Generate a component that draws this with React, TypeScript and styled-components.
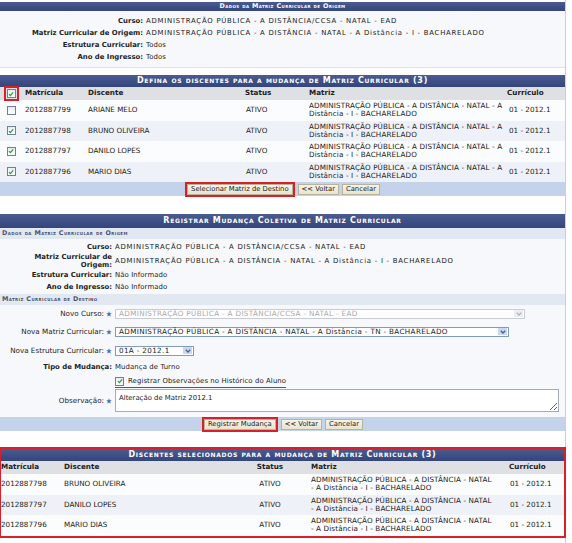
import React from "react";
import styled, { createGlobalStyle } from "styled-components";

const GlobalStyle = createGlobalStyle`
  body {
    margin: 0;
    background: #fff;
    font-family: "DejaVu Sans", Verdana, sans-serif;
    font-size: 7.2px;
    color: #222;
  }
`;

const Page = styled.div`
  width: 566px;
  min-height: 543px;
  border-right: 1px solid #cfcfcf;
  padding-top: 2px;
  box-sizing: border-box;
`;

const Caption = styled.div<{ $small?: boolean; $h?: number }>`
  background: linear-gradient(#4a5b90, #34457c);
  color: #fff;
  text-align: center;
  font-weight: bold;
  font-variant: small-caps;
  font-size: ${(p) => (p.$small ? "6.4px" : "8px")};
  letter-spacing: ${(p) => (p.$small ? "0.4px" : "0.7px")};
  height: ${(p) => (p.$small ? 9 : p.$h ?? 12)}px;
  line-height: ${(p) => (p.$small ? 9 : p.$h ?? 12)}px;
`;

const SubCaption = styled.div`
  background: #e2e8f2;
  color: #4b5370;
  font-weight: bold;
  font-variant: small-caps;
  font-size: 6.4px;
  letter-spacing: 0.4px;
  height: 11px;
  line-height: 11px;
  padding-left: 2px;
`;

const InfoPanel = styled.section`
  background: #f7f8fb;
  border-bottom: 1px solid #e2e2e2;
  padding: 4px 0 4px;
`;

const InfoGrid = styled.div<{ $label: number; $pad?: string }>`
  display: grid;
  grid-template-columns: ${(p) => p.$label}px 1fr;
  column-gap: 3px;
  align-items: center;
  padding: ${(p) => p.$pad ?? "0"};
`;

const Label = styled.div`
  font-weight: bold;
  font-size: 6.9px;
  text-align: right;
  line-height: 8px;
  min-height: 12px;
  display: flex;
  align-items: center;
  justify-content: flex-end;
`;

const Value = styled.div<{ $caps?: boolean }>`
  line-height: 12px;
  font-size: 6.9px;
  letter-spacing: ${(p) => (p.$caps ? "0.75px" : "0.1px")};
`;

const TableBox = styled.section<{ $marked?: boolean }>`
  margin-top: ${(p) => (p.$marked ? "16px" : "7px")};
  border: ${(p) => (p.$marked ? "2px solid #d8202a" : "none")};
  margin-left: ${(p) => (p.$marked ? "-1px" : "0")};
  margin-right: ${(p) => (p.$marked ? "-1px" : "0")};
`;

const Row = styled.div<{ $cols: string; $alt?: boolean; $head?: boolean }>`
  display: grid;
  grid-template-columns: ${(p) => p.$cols};
  align-items: center;
  min-height: ${(p) => (p.$head ? "13px" : "20.5px")};
  background: ${(p) => (p.$head ? "#dfe0e4" : p.$alt ? "#eef2f8" : "#fbfcfd")};
  font-weight: ${(p) => (p.$head ? "bold" : "normal")};
`;

const Cell = styled.div<{ $pad?: number; $center?: boolean }>`
  padding-left: ${(p) => p.$pad ?? 3}px;
  text-align: ${(p) => (p.$center ? "center" : "left")};
  line-height: 8.2px;
  display: flex;
  align-items: center;
  justify-content: ${(p) => (p.$center ? "center" : "flex-start")};
`;

const Matriz = styled.div`
  white-space: nowrap;
  line-height: 8.2px;
  letter-spacing: 0.12px;
`;

const Footer = styled.div`
  background: #c5d3ea;
  height: 14px;
  display: flex;
  justify-content: center;
  align-items: center;
  gap: 3px;
`;

const Button = styled.button<{ $marked?: boolean }>`
  font-family: inherit;
  font-size: 6.8px;
  color: #222;
  background: linear-gradient(#f6f3e6, #e9e4cf);
  border: 1px solid #b8b49c;
  height: 11px;
  padding: 0 3px;
  line-height: 9px;
  outline: ${(p) => (p.$marked ? "2px solid #d8202a" : "none")};
  outline-offset: 0px;
  margin: ${(p) => (p.$marked ? "0 2px" : "0")};
`;

const Box = styled.span<{ $marked?: boolean }>`
  display: inline-flex;
  width: 7px;
  height: 7px;
  border: 1px solid #6f7f9c;
  background: linear-gradient(#e8ebf0, #fff);
  align-items: center;
  justify-content: center;
  outline: ${(p) => (p.$marked ? "2px solid #d8202a" : "none")};
  outline-offset: 1px;
`;

const FormPanel = styled.section`
  background: #f7f8fb;
`;

const FormGrid = styled.div`
  display: grid;
  grid-template-columns: 112px 1fr;
  column-gap: 3px;
  padding: 1px 0 3px;
  align-items: center;
`;

const FormLabel = styled.div<{ $bold?: boolean; $h: number }>`
  height: ${(p) => p.$h}px;
  display: flex;
  align-items: center;
  justify-content: flex-end;
  gap: 2px;
  font-weight: ${(p) => (p.$bold ? "bold" : "normal")};
  font-size: ${(p) => (p.$bold ? "6.9px" : "7.2px")};
`;

const FormField = styled.div<{ $h: number }>`
  height: ${(p) => p.$h}px;
  display: flex;
  align-items: center;
  font-size: 6.9px;
  letter-spacing: 0.1px;
`;

const SelectBox = styled.div<{ $width: number; $disabled?: boolean }>`
  width: ${(p) => p.$width}px;
  height: 10px;
  box-sizing: border-box;
  border: 1px solid ${(p) => (p.$disabled ? "#c9ccd2" : "#7f9db9")};
  background: #fff;
  color: ${(p) => (p.$disabled ? "#a9a9a9" : "#222")};
  display: flex;
  align-items: center;
  justify-content: space-between;
  padding-left: 3px;
  padding-right: 1px;
  font-size: 7.2px;
  letter-spacing: 0.35px;
`;

const Arrow = styled.span<{ $disabled?: boolean }>`
  width: 9px;
  height: 7px;
  background: ${(p) => (p.$disabled ? "#eceef1" : "#c7d8f6")};
  display: flex;
  align-items: center;
  justify-content: center;
`;

const CheckLine = styled.label`
  display: inline-flex;
  align-items: center;
  gap: 4px;
  padding-bottom: 1px;
  border-bottom: 1.5px solid #d8202a;
  margin-top: 2px;
`;

const TextArea = styled.textarea`
  width: 444px;
  height: 23px;
  box-sizing: border-box;
  font-family: inherit;
  font-size: 6.9px;
  color: #222;
  border: 1px solid #a5acb5;
  padding: 4px 3px;
  margin: 0;
`;

const Spacer = styled.div<{ $h: number }>`
  height: ${(p) => p.$h}px;
`;

function Star() {
  return (
    <svg width="6" height="6" viewBox="0 0 10 10">
      <polygon
        points="5,0.5 6.3,3.7 9.6,3.8 7,5.9 7.9,9.3 5,7.4 2.1,9.3 3,5.9 0.4,3.8 3.7,3.7"
        fill="#3b6fc6"
      />
    </svg>
  );
}

function CheckBox({ checked, marked }: { checked: boolean; marked?: boolean }) {
  return (
    <Box $marked={marked}>
      {checked && (
        <svg width="6" height="6" viewBox="0 0 10 10">
          <path d="M1.5 5.2 L4 7.6 L8.6 2.4" stroke="#21a038" strokeWidth="2" fill="none" />
        </svg>
      )}
    </Box>
  );
}

function Select({ width, text, disabled }: { width: number; text: string; disabled?: boolean }) {
  return (
    <SelectBox $width={width} $disabled={disabled}>
      <span>{text}</span>
      <Arrow $disabled={disabled}>
        <svg width="6" height="4" viewBox="0 0 6 4">
          <path d="M0.8 0.8 L3 3 L5.2 0.8" stroke={disabled ? "#b0b4ba" : "#4d6185"} strokeWidth="1.3" fill="none" />
        </svg>
      </Arrow>
    </SelectBox>
  );
}

const alunos = [
  { matricula: "2012887799", nome: "ARIANE MELO", marcado: false },
  { matricula: "2012887798", nome: "BRUNO OLIVEIRA", marcado: true },
  { matricula: "2012887797", nome: "DANILO LOPES", marcado: true },
  { matricula: "2012887796", nome: "MARIO DIAS", marcado: true },
];

const COLS_DEF = "22px 63px 157px 63px 200px 1fr";
const COLS_SEL = "60px 188px 42px 215px 1fr";

export default function App() {
  const selecionados = alunos.filter((a) => a.marcado);

  return (
    <Page>
      <GlobalStyle />

      <Caption $small>Dados da Matriz Curricular de Origem</Caption>
      <InfoPanel>
        <InfoGrid $label={143}>
          <Label>Curso:</Label>
          <Value $caps>ADMINISTRAÇÃO PÚBLICA - A DISTÂNCIA/CCSA - NATAL - EAD</Value>
          <Label>Matriz Curricular de Origem:</Label>
          <Value $caps>ADMINISTRAÇÃO PÚBLICA - A DISTÂNCIA - NATAL - A Distância - I - BACHARELADO</Value>
          <Label>Estrutura Curricular:</Label>
          <Value>Todos</Value>
          <Label>Ano de Ingresso:</Label>
          <Value>Todos</Value>
        </InfoGrid>
      </InfoPanel>

      <TableBox>
        <Caption>Defina os discentes para a mudança de Matriz Curricular (3)</Caption>
        <Row $cols={COLS_DEF} $head>
          <Cell $pad={0} $center>
            <CheckBox checked marked />
          </Cell>
          <Cell>Matrícula</Cell>
          <Cell>Discente</Cell>
          <Cell>Status</Cell>
          <Cell $pad={4}>Matriz</Cell>
          <Cell $pad={2}>Currículo</Cell>
        </Row>
        {alunos.map((a, i) => (
          <Row key={a.matricula} $cols={COLS_DEF} $alt={i % 2 === 1}>
            <Cell $pad={0} $center>
              <CheckBox checked={a.marcado} />
            </Cell>
            <Cell>{a.matricula}</Cell>
            <Cell>{a.nome}</Cell>
            <Cell $pad={4}>ATIVO</Cell>
            <Cell $pad={4}>
              <Matriz>
                ADMINISTRAÇÃO PÚBLICA - A DISTÂNCIA - NATAL - A
                <br />
                Distância - I - BACHARELADO
              </Matriz>
            </Cell>
            <Cell $pad={4}>01 - 2012.1</Cell>
          </Row>
        ))}
        <Footer>
          <Button $marked>Selecionar Matriz de Destino</Button>
          <Button>&lt;&lt; Voltar</Button>
          <Button>Cancelar</Button>
        </Footer>
      </TableBox>

      <Spacer $h={18} />

      <Caption $h={14}>Registrar Mudança Coletiva de Matriz Curricular</Caption>
      <SubCaption>Dados da Matriz Curricular de Origem</SubCaption>
      <FormPanel>
        <InfoGrid $label={112} $pad="2px 0 1px">
          <Label>Curso:</Label>
          <Value $caps>ADMINISTRAÇÃO PÚBLICA - A DISTÂNCIA/CCSA - NATAL - EAD</Value>
          <Label>
            Matriz Curricular de
            <br />
            Origem:
          </Label>
          <Value $caps>ADMINISTRAÇÃO PÚBLICA - A DISTÂNCIA - NATAL - A Distância - I - BACHARELADO</Value>
          <Label>Estrutura Curricular:</Label>
          <Value>Não Informado</Value>
          <Label>Ano de Ingresso:</Label>
          <Value>Não Informado</Value>
        </InfoGrid>
        <SubCaption>Matriz Curricular de Destino</SubCaption>
        <FormGrid>
          <FormLabel $h={15}>
            Novo Curso: <Star />
          </FormLabel>
          <FormField $h={15}>
            <Select width={410} disabled text="ADMINISTRAÇÃO PÚBLICA - A DISTÂNCIA/CCSA - NATAL - EAD" />
          </FormField>
          <FormLabel $h={21}>
            Nova Matriz Curricular: <Star />
          </FormLabel>
          <FormField $h={21}>
            <Select width={394} text="ADMINISTRAÇÃO PÚBLICA - A DISTÂNCIA - NATAL - A Distância - TN - BACHARELADO" />
          </FormField>
          <FormLabel $h={17}>
            Nova Estrutura Curricular: <Star />
          </FormLabel>
          <FormField $h={17}>
            <Select width={79} text="01A - 2012.1" />
          </FormField>
          <FormLabel $h={16} $bold>
            Tipo de Mudança:
          </FormLabel>
          <FormField $h={16}>Mudança de Turno</FormField>
          <div />
          <FormField $h={12}>
            <CheckLine>
              <CheckBox checked />
              Registrar Observações no Histórico do Aluno
            </CheckLine>
          </FormField>
          <FormLabel $h={27}>
            Observação: <Star />
          </FormLabel>
          <FormField $h={27}>
            <TextArea defaultValue="Alteração de Matriz 2012.1" />
          </FormField>
        </FormGrid>
        <Footer>
          <Button $marked>Registrar Mudança</Button>
          <Button>&lt;&lt; Voltar</Button>
          <Button>Cancelar</Button>
        </Footer>
      </FormPanel>

      <TableBox $marked>
        <Caption>Discentes selecionados para a mudança de Matriz Curricular (3)</Caption>
        <Row $cols={COLS_SEL} $head>
          <Cell $pad={0}>Matrícula</Cell>
          <Cell>Discente</Cell>
          <Cell $pad={0} $center>
            Status
          </Cell>
          <Cell $pad={20}>Matriz</Cell>
          <Cell $pad={3}>Currículo</Cell>
        </Row>
        {selecionados.map((a, i) => (
          <Row key={a.matricula} $cols={COLS_SEL} $alt={i % 2 === 1}>
            <Cell $pad={0}>{a.matricula}</Cell>
            <Cell>{a.nome}</Cell>
            <Cell $pad={0} $center>
              ATIVO
            </Cell>
            <Cell $pad={20}>
              <Matriz>
                ADMINISTRAÇÃO PÚBLICA - A DISTÂNCIA - NATAL
                <br />- A Distância - I - BACHARELADO
              </Matriz>
            </Cell>
            <Cell $pad={4}>01 - 2012.1</Cell>
          </Row>
        ))}
      </TableBox>
    </Page>
  );
}
